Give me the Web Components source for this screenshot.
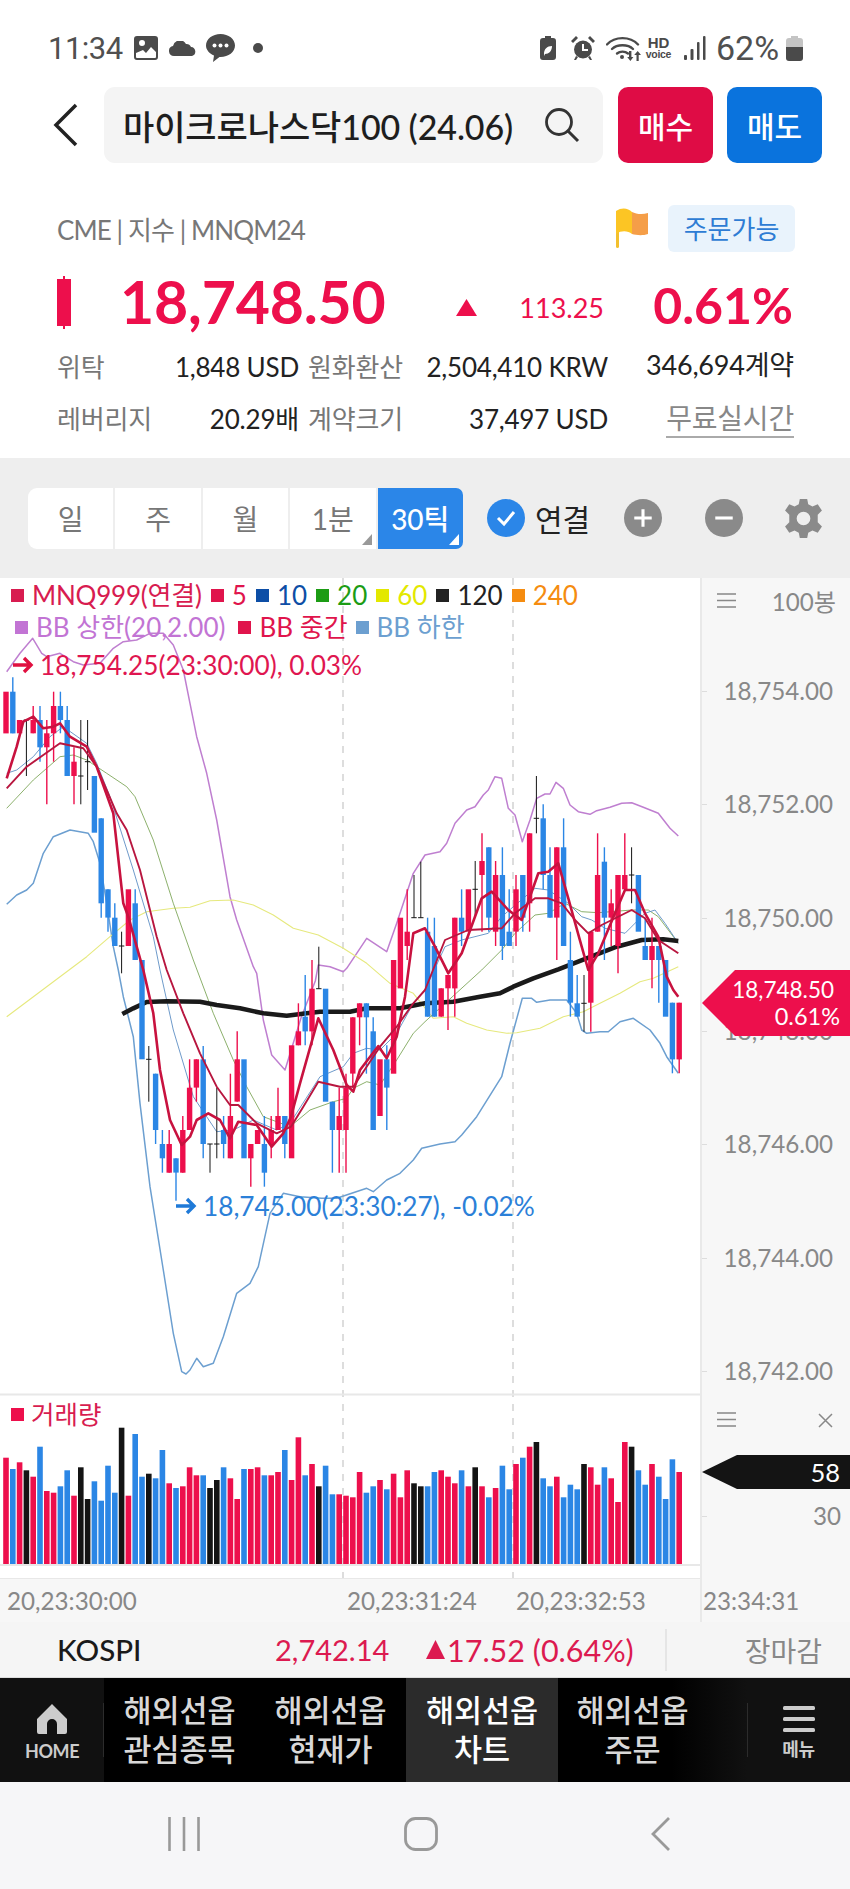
<!DOCTYPE html>
<html lang="ko">
<head>
<meta charset="utf-8">
<title>해외선옵 차트</title>
<style>
  html, body { margin: 0; padding: 0; background: #fff; }
  body { width: 850px; height: 1889px; overflow: hidden; display: flex; flex-direction: column; font-family: "Lato", "Noto Sans CJK KR", sans-serif; color: #222; }
</style>
</head>
<body>
<status-bar></status-bar>
<search-header name="마이크로나스닥100 (24.06)"></search-header>
<quote-panel></quote-panel>
<period-toolbar></period-toolbar>
<stock-chart></stock-chart>
<ticker-bar></ticker-bar>
<bottom-nav></bottom-nav>
<system-bar></system-bar>

<script>
class BaseElement extends HTMLElement {
  constructor() {
    super();
    this.attachShadow({ mode: "open" });
  }
  connectedCallback() {
    const template = document.createElement("template");
    template.innerHTML = `<style>${this.getStyle()}</style>${this.getTemplate()}`;
    this.shadowRoot.appendChild(template.content.cloneNode(true));
  }
}

class StatusBar extends BaseElement {
  getStyle() {
    return `
      :host { display: flex; align-items: center; height: 76px; padding: 20px 47px 0 48px; box-sizing: border-box; color: #555; font-size: 31px; }
      svg { display: block; fill: #4a4a4a; flex: none; }
      .left, .right { display: flex; align-items: center; }
      .right { margin-left: auto; }
      .clock { width: 72px; letter-spacing: -.5px; color: #505050; font-family: "Roboto", sans-serif; }
      .pct { width: 70px; margin-left: 10px; font-size: 34px; font-family: "Roboto", sans-serif; color: #505050; white-space: nowrap; }
      .hd { width: 27px; height: 26px; margin-left: 3px; line-height: 1; text-align: center; font-family: "Liberation Sans", sans-serif; color: #4a4a4a; }
      .hd b { display: block; font-size: 15px; height: 14px; letter-spacing: 0; }
      .hd span { display: block; font-size: 10.5px; font-weight: 700; letter-spacing: -.3px; }
    `;
  }
  getTemplate() {
    return `
      <div class="left">
        <span class="clock">11:34</span>
        <svg style="margin-left:14px" width="24" height="24" viewBox="0 0 24 24"><path fill-rule="evenodd" d="M3 0h18a3 3 0 0 1 3 3v18a3 3 0 0 1-3 3H3a3 3 0 0 1-3-3V3a3 3 0 0 1 3-3zM2 17v4a1 1 0 0 0 1 1h18a1 1 0 0 0 1-1v-5l-5-5-5 6-3-3zM8 4a3 3 0 1 0 0 6 3 3 0 0 0 0-6z"/></svg>
        <svg style="margin-left:11px" width="28" height="15" viewBox="0 0 28 15"><path d="M5 15a5 5 0 0 1-1-9.9A7 7 0 0 1 17 3a5 5 0 0 1 5 3 4.6 4.6 0 0 1 1 9z"/></svg>
        <svg style="margin-left:9px" width="29" height="28" viewBox="0 0 29 28"><path d="M14.500 0C22.500 0 29 5 29 11.500S22.500 23 14.500 23h-1L7 28l1-6.500C3.500 19.500 0 16 0 11.500 0 5 6.500 0 14.500 0z"/><circle cx="8.500" cy="11.500" r="2" fill="#fff"/><circle cx="14.500" cy="11.500" r="2" fill="#fff"/><circle cx="20.500" cy="11.500" r="2" fill="#fff"/></svg>
        <svg style="margin-left:18px" width="10" height="10" viewBox="0 0 10 10"><circle cx="5" cy="5" r="5"/></svg>
      </div>
      <div class="right">
        <svg width="16" height="24" viewBox="0 0 16 24"><path d="M5 0h6v2h2a3 3 0 0 1 3 3v16a3 3 0 0 1-3 3H3a3 3 0 0 1-3-3V5a3 3 0 0 1 3-3h2z"/><path d="M4 18c0-5 3-8 8-8 0 5-3 8-7 8l-1 2z" fill="#fff"/></svg>
        <svg style="margin-left:15px" width="24" height="24" viewBox="0 0 24 24"><circle cx="12" cy="13.500" r="9"/><path d="M5 0 0 5l2 2 5-5zM19 0l5 5-2 2-5-5zM5 20l-2 4h2l2-3zM19 20l2 4h-2l-2-3z"/><path d="M12 8v6h5" fill="none" stroke="#fff" stroke-width="2"/></svg>
        <svg style="margin-left:11px" width="36" height="26" viewBox="0 0 36 26"><g fill="none" stroke="#4a4a4a" stroke-width="2.400" stroke-linecap="round"><path d="M1 9.500C9 1 24 1 32 9.500"/><path d="M6 14c5-5 16-5 21 0"/><path d="M11 18.500c3-2.500 8-2.500 11 0"/></g><circle cx="16" cy="22" r="2"/><path d="M23 16h2.400v6h2l-3 4-3.200-4h1.800zM30.500 26h2.200v-6h2.300l-3.300-4-3.500 4h2.300z"/></svg>
        <div class="hd"><b>HD</b><span>voice</span></div>
        <svg style="margin-left:12px" width="22" height="24" viewBox="0 0 22 24"><rect x="0" y="19" width="3" height="5" rx="1"/><rect x="6.500" y="13" width="3" height="11" rx="1"/><rect x="13" y="6" width="2.500" height="18" rx="1"/><rect x="19" y="0" width="2.500" height="24" rx="1"/></svg>
        <span class="pct">62%</span>
        <svg width="17" height="25" viewBox="0 0 17 25"><path d="M5 0h7v2h2a3 3 0 0 1 3 3v6H0V5a3 3 0 0 1 3-3h2z" fill="#c4c4c4"/><path d="M0 11h17v11a3 3 0 0 1-3 3H3a3 3 0 0 1-3-3z" fill="#4a4a4a"/></svg>
      </div>
    `;
  }
}

class SearchHeader extends BaseElement {
  getStyle() {
    return `
      :host { display: flex; align-items: flex-start; height: 99px; padding: 11px 28px 0 0; box-sizing: border-box; }
      .back { display: block; width: 104px; height: 44px; flex: none; margin-top: 16px; }
      .box { flex: 1; height: 76px; display: flex; align-items: center; background: #f4f4f4; border-radius: 11px; padding: 0 23px 0 19px; box-sizing: border-box; color: #1e1e1e; font-size: 34px; font-weight: 500; letter-spacing: -.1px; white-space: nowrap; }
      .box svg { margin-left: auto; flex: none; }
      .btn { flex: none; width: 95px; height: 76px; display: flex; align-items: center; justify-content: center; border-radius: 10px; color: #fff; font-size: 30px; font-weight: 500; }
      .buy { background: #df0c45; margin-left: 15px; }
      .sell { background: #0a73dd; margin-left: 14px; }
    `;
  }
  getTemplate() {
    return `
      <svg class="back" viewBox="0 0 104 44"><path d="M76 2 56 22l20 20" fill="none" stroke="#222" stroke-width="3.500"/></svg>
      <div class="box"><span>${this.getAttribute("name")}</span>
        <svg width="36" height="36" viewBox="0 0 36 36"><circle cx="15" cy="15" r="12.500" fill="none" stroke="#333" stroke-width="2.800"/><path d="m24 24 10 10" stroke="#333" stroke-width="3"/></svg>
      </div>
      <div class="btn buy">매수</div>
      <div class="btn sell">매도</div>
    `;
  }
}

class QuotePanel extends BaseElement {
  getStyle() {
    return `
      :host { display: block; height: 283px; padding: 30px 57px 0; box-sizing: border-box; }
      .top { display: flex; align-items: center; height: 47px; color: #777; font-size: 26px; letter-spacing: -.9px; }
      .top svg { margin-left: auto; }
      .badge { margin-left: 20px; margin-right: -2px; width: 127px; height: 45px; padding-bottom: 2px; display: flex; align-items: center; justify-content: center; background: #e9f3fc; border-radius: 6px; color: #2e7cd4; font-size: 26px; letter-spacing: 0; }
      .price { display: grid; grid-template-columns: 63px 1fr; align-items: center; height: 64px; margin-top: 17px; color: #ed0f4c; }
      .price .now { font-size: 59px; font-weight: 700; letter-spacing: -.2px; line-height: 64px; }
      .main { display: flex; align-items: center; }
      .tri { margin-left: auto; margin-top: 10px; }
      .chg { width: 127px; text-align: right; font-size: 27px; margin-top: 10px; }
      .pct { width: 189px; text-align: right; font-size: 50px; font-weight: 700; margin-top: 6px; }
      .grid { display: grid; grid-template-columns: 95px 147px 102px 207px 185px; align-items: center; font-size: 26px; color: #222; margin-top: 8px; letter-spacing: -.2px; }
      .grid > div { height: 52px; line-height: 52px; white-space: nowrap; }
      .l { color: #777; }
      .v { text-align: right; }
      .gap { padding-left: 9px; }
      .grid > .lot { font-size: 27px; margin-top: -4px; margin-right: -1px; }
      .grid > .free { color: #888; text-align: right; font-size: 28px; margin-right: -1px; margin-top: -2px; }
      .free span { border-bottom: 2px solid #aaa; padding-bottom: 1px; }
    `;
  }
  getTemplate() {
    return `
      <div class="top">
        <span>CME | 지수 | MNQM24</span>
        <svg width="32" height="42" viewBox="0 0 32 42"><rect x="0" y="3" width="3" height="37" rx="1.500" fill="#f3c02e"/><path d="M0 3c6-4 12-3 16 1v22C12 23 6 22 0 26z" fill="#fcc524"/><path d="M16 4c4 2 10 3 16 1v21c-6 2-12 1-16 0z" fill="#f59e48"/></svg>
        <div class="badge">주문가능</div>
      </div>
      <div class="price">
        <svg width="14" height="53" viewBox="0 0 14 53"><path d="M6 0h2v3h6v47H8v3H6v-3H0V3h6z" fill="#ed0f4c"/></svg>
        <div class="main">
          <span class="now">18,748.50</span>
          <svg class="tri" width="21" height="17" viewBox="0 0 21 17"><path d="M10.500 0 21 17H0z" fill="#ed0f4c"/></svg>
          <span class="chg">113.25</span>
          <span class="pct">0.61%</span>
        </div>
      </div>
      <div class="grid">
        <div class="l">위탁</div><div class="v">1,848 USD</div><div class="l gap">원화환산</div><div class="v">2,504,410 KRW</div><div class="v lot">346,694계약</div>
        <div class="l">레버리지</div><div class="v">20.29배</div><div class="l gap">계약크기</div><div class="v">37,497 USD</div><div class="free"><span>무료실시간</span></div>
      </div>
    `;
  }
}

class PeriodToolbar extends BaseElement {
  getStyle() {
    return `
      :host { display: flex; align-items: center; height: 120px; padding: 0 27px 0 28px; box-sizing: border-box; background: #eee; }
      .tabs { display: grid; grid-template-columns: repeat(5, 85.400px); column-gap: 2px; height: 61px; width: 435px; }
      .tab { position: relative; display: flex; align-items: center; justify-content: center; background: #fff; color: #777; font-size: 28px; }
      .tab:first-child { border-radius: 9px 0 0 9px; }
      .on { background: #2b86e8; color: #fff; border-radius: 0 7px 7px 0; font-weight: 500; }
      .corner::after { content: ""; position: absolute; right: 4px; bottom: 4px; border-style: solid; border-width: 0 0 11px 10px; border-color: transparent transparent #999 transparent; }
      .on.corner::after { border-bottom-color: #fff; }
      .link { display: flex; align-items: center; margin-left: 24px; color: #222; font-size: 30px; }
      .link span { margin-left: 10px; }
      .ctl { display: flex; align-items: center; margin-left: auto; }
      .ctl svg { display: block; margin-left: 43px; }
      .ctl svg:first-child { margin-left: 0; }
      .ctl svg:last-child { margin-left: 41px; }
    `;
  }
  getTemplate() {
    return `
      <div class="tabs">
        <div class="tab">일</div><div class="tab">주</div><div class="tab">월</div>
        <div class="tab corner">1분</div><div class="tab on corner">30틱</div>
      </div>
      <div class="link">
        <svg width="38" height="38" viewBox="0 0 38 38"><circle cx="19" cy="19" r="19" fill="#2b86e8"/><path d="m11 19 6 6 10-12" fill="none" stroke="#fff" stroke-width="3"/></svg>
        <span>연결</span>
      </div>
      <div class="ctl">
        <svg width="38" height="38" viewBox="0 0 37 37"><circle cx="18.500" cy="18.500" r="18.500" fill="#8a8a8a"/><path d="M18.500 10v17M10 18.500h17" stroke="#fff" stroke-width="3"/></svg>
        <svg width="38" height="38" viewBox="0 0 37 37"><circle cx="18.500" cy="18.500" r="18.500" fill="#8a8a8a"/><path d="M10 18.500h17" stroke="#fff" stroke-width="3"/></svg>
        <svg width="39" height="39" viewBox="0 0 37 37"><path fill="#8a8a8a" fill-rule="evenodd" d="M15 0h7l1 5 4 2 5-2 4 6-4 4v7l4 4-4 6-5-2-4 2-1 5h-7l-1-5-4-2-5 2-4-6 4-4v-7L1 11l4-6 5 2 4-2zM18.500 12a6.500 6.500 0 1 0 0 13 6.500 6.500 0 0 0 0-13z"/></svg>
      </div>
    `;
  }
}

const RED = "#ed0f4c", BLUE = "#2b86e5", BLACK = "#141414";
const COLORS = { r: RED, b: BLUE, k: BLACK };

// color, body top, body bottom, wick top, wick bottom (measured on a 3x grid, y = 570 + v / 3)
const CANDLES = [
  ["r",365,490],["b",365,490,322,490],["r",450,490],["k",450,452,450,618],["r",450,490,408,490],
  ["b",450,532,408,575],["r",490,532,450,703],["r",408,490,365,575],["b",408,450,365,490],["b",450,618,408,618],
  ["r",575,618,532,703],["k",618,620,450,703],["k",575,577,450,660],["b",618,788],["b",745,1000,745,1043],
  ["b",958,1043,958,1085],["b",1043,1128,1000,1128],["k",1128,1130,1085,1210],["r",958,1128],["b",1000,1170,958,1170],
  ["b",1170,1468],["k",1468,1470,1428,1595],["b",1511,1680,1511,1722],["b",1722,1765,1680,1808],["r",1722,1808,1680,1808],
  ["b",1765,1808,1765,1892],["r",1680,1808,1638,1808],["r",1553,1680,1468,1680],["r",1468,1553,1468,1595],["b",1468,1722,1428,1765],
  ["k",1722,1724,1722,1808],["k",1722,1724,1553,1765],["b",1680,1722,1638,1765],["r",1638,1765,1511,1765],["r",1468,1595,1384,1595],
  ["b",1468,1765],["r",1722,1765,1722,1850],["r",1680,1722],["b",1722,1808,1638,1850],["r",1680,1722,1638,1765],
  ["r",1638,1680,1553,1680],["b",1638,1722,1638,1765],["r",1426,1765],["r",1384,1426,1300,1426],["b",1340,1384,1215,1426],
  ["r",1256,1384,1170,1426],["k",1256,1258,1130,1256],["b",1256,1595],["b",1595,1680,1595,1808],["r",1638,1680,1553,1808],
  ["r",1553,1680,1511,1808],["r",1342,1511,1342,1553],["r",1300,1342,1300,1426],["b",1300,1342,1300,1511],["b",1384,1680,1342,1680],
  ["r",1468,1638],["b",1468,1553,1426,1680],["r",1170,1511],["r",1043,1255],["r",1085,1128,958,1170],
  ["k",1043,1045,915,1043],["k",1043,1045,875,1043],["b",1085,1340,1043,1340],["b",1128,1340,1043,1340],["r",1255,1340,1255,1340],
  ["r",1215,1255,1215,1380],["r",1043,1255,1043,1340],["b",1043,1085,958,1128],["r",958,1085],["k",958,960,873,1043],
  ["r",873,915,790,1085],["b",832,1043,832,1085],["r",915,1085,873,1128],["b",915,1128,832,1170],["b",1085,1128,958,1128],
  ["r",958,1085,915,1128],["b",915,1043,915,1085],["r",790,1000,790,1085],["k",745,747,618,790],["b",745,915,703,958],
  ["b",915,1043,832,1043],["r",832,1043,832,1170],["b",832,1128,745,1128],["b",1170,1298,1085,1340],["b",1300,1340,1215,1340],
  ["k",1300,1302,1215,1385],["r",1085,1298,1085,1385],["r",915,1085,790,1085],["b",875,1043,832,1170],["r",1000,1043,958,1128],
  ["r",915,1128,915,1210],["r",915,958,790,958],["k",915,917,832,1000],["b",915,1085],["b",1128,1170,1043,1170],
  ["r",1128,1170,1043,1255],["b",1128,1170,1128,1298],["b",1170,1340],["b",1298,1468,1298,1510],["r",1298,1468,1298,1510]
];

// height tops of the volume bars, same grid, y = 1370 + v / 3
const VOLUME = "r263 b297 r277 k301 r320 b230 r363 r368 b349 b301 r377 k292 k387 b334 b392 b287 b368 k173 r377 b192 b320 k311 b325 b240 r340 b354 r349 r292 r316 b316 k354 k330 b292 r325 r387 b297 r297 r292 b316 r316 r306 b240 r330 r202 b316 r282 k349 b287 b373 r373 r377 r382 r306 b368 b349 r330 b358 r311 r382 r301 k340 k349 b349 b306 r301 r320 r340 b301 r349 k292 r349 b382 r354 b287 b358 r282 b263 r230 k216 b325 b349 r320 b382 b344 b358 k282 r292 r344 b292 r325 r396 r216 k230 b301 b344 r282 b320 b387 b268 r306".split(" ");

const LINES = [
  { c: "#bf7fd0", w: 1.5, p: "20,305 60,250 98,205 125,250 140,260 180,250 220,275 250,285 300,280 340,235 370,215 410,210 450,190 490,190 520,225 550,300 570,400 590,500 620,610 650,750 690,980 710,1050 760,1190 770,1210 790,1350 815,1455 855,1500 903,1344 946,1233 955,1185 990,1190 1030,1205 1040,1195 1100,1105 1160,1145 1190,1060 1240,910 1275,855 1320,845 1340,820 1365,760 1400,720 1425,710 1450,675 1465,660 1485,620 1505,625 1525,715 1545,735 1567,815 1590,750 1610,685 1635,672 1650,672 1668,637 1690,655 1710,705 1735,725 1770,733 1790,722 1830,712 1865,700 1895,698 1930,712 1975,730 2010,775 2035,798" },
  { c: "#6c9fd0", w: 1.5, p: "20,1003 50,975 80,960 100,940 130,850 160,800 210,780 265,790 280,815 300,880 320,1000 340,1130 355,1200 370,1280 400,1400 420,1600 450,1850 490,2100 520,2290 545,2405 558,2412 570,2400 590,2365 610,2390 640,2380 670,2300 710,2170 750,2140 775,2090 810,1930 850,1870 900,1880 965,1885 1010,1885 1100,1855 1120,1865 1160,1830 1200,1810 1240,1770 1265,1735 1320,1722 1365,1715 1385,1695 1430,1640 1505,1520 1530,1420 1567,1285 1595,1285 1610,1297 1650,1290 1700,1290 1730,1330 1745,1380 1760,1390 1800,1385 1825,1385 1860,1355 1900,1345 1950,1380 1980,1420 2000,1460 2035,1510" },
  { c: "#e6e97e", w: 1.1, p: "20,1340 200,1205 260,1160 330,1100 390,1050 440,1025 520,1015 570,1012 630,992 700,990 760,1005 820,1035 880,1075 955,1095 1030,1135 1100,1180 1170,1240 1240,1270 1300,1345 1360,1340 1400,1360 1460,1380 1520,1390 1550,1388 1620,1375 1690,1340 1750,1325 1800,1300 1860,1270 1920,1235 1960,1225 2035,1190" },
  { c: "#6f9c46", w: .8, p: "20,715 100,630 180,560 220,555 260,570 320,610 380,650 405,680 460,810 520,1000 580,1170 640,1330 700,1470 740,1550 790,1640 870,1670 930,1620 1000,1595 1040,1585 1060,1555 1100,1535 1140,1545 1190,1470 1240,1390 1275,1355 1445,1200 1505,1140 1545,1090 1605,1035 1645,1030 1695,1000 1745,1025 1795,1028 1895,1020 1945,1020 1975,1040 2035,1120" },
  { c: "#5e8ec4", w: .9, p: "20,610 50,600 100,560 150,500 190,470 260,520 290,580 330,680 400,900 460,1100 480,1200 520,1380 580,1580 650,1685 700,1680 760,1650 830,1680 870,1660 960,1520 1030,1490 1060,1450 1100,1435 1140,1440 1190,1390 1240,1300 1275,1260 1335,1130 1385,1110 1465,1090 1505,1040 1605,955 1645,960 1705,1000 1745,1040 1775,1050 1815,1075 1875,1090 1935,1030 1965,1020 1995,1060 2035,1120" },
  { c: "#1a1a1a", w: 4.6, p: "367,1332 400,1315 440,1296 500,1294 600,1295 650,1305 720,1315 790,1330 860,1337 920,1330 960,1325 1050,1325 1100,1315 1200,1315 1275,1300 1360,1295 1440,1280 1500,1270 1540,1250 1600,1225 1675,1198 1850,1130 1925,1110 1990,1108 2035,1113" }
];
const TOP_LINES = [
  { c: "#b8163f", w: 1.9, p: "20,655 80,590 130,555 180,520 250,535 290,590 350,730 380,780 420,900 470,1100 500,1200 550,1330 600,1450 650,1550 690,1605 715,1605 770,1660 830,1690 873,1670 910,1610 955,1535 1020,1550 1060,1550 1140,1430 1190,1370 1240,1300 1275,1260 1335,1110 1405,1080 1505,1075 1545,1030 1605,985 1645,985 1685,1000 1725,1050 1765,1090 1805,1065 1895,1020 1935,1045 1975,1110 2035,1150" },
  { c: "#c8123f", w: 2.6, p: "20,625 50,530 70,455 100,440 130,475 160,470 180,460 210,500 260,530 290,590 340,730 370,1000 385,1040 410,1130 430,1200 460,1330 480,1500 510,1650 545,1725 570,1700 590,1650 625,1630 660,1650 690,1705 715,1655 770,1665 815,1730 850,1690 873,1640 900,1540 955,1345 1000,1440 1040,1545 1060,1565 1080,1500 1135,1428 1160,1465 1190,1400 1215,1280 1240,1090 1275,1075 1305,1130 1335,1190 1345,1210 1385,1150 1445,985 1475,965 1525,1020 1565,1050 1615,910 1645,905 1675,880 1705,985 1745,1130 1765,1200 1795,1150 1845,1030 1875,960 1905,960 1935,1030 1975,1100 2000,1220 2020,1260 2035,1280" }
];

const yOf = price => 691 + (18754 - price) * 56.667;
const pts = s => s.split(" ").map(p => { const [x, y] = p.split(","); return `${(x / 3).toFixed(1)},${(570 + y / 3).toFixed(1)}`; }).join(" ");

class StockChart extends BaseElement {
  getStyle() {
    return `
      :host { display: grid; grid-template-columns: 700px 150px; grid-template-rows: 1001px 43px; background: #f7f7f7; }
      .plot { position: relative; background: #fff; height: 1001px; }
      .plot > svg { position: absolute; left: 0; top: 0; overflow: visible; }
      .axis { position: relative; border-left: 2px solid #e9e9e9; box-sizing: border-box; color: #888; font-size: 24.200px; }
      .tick { position: absolute; left: 0; right: 17px; text-align: right; transform: translateY(-50%); line-height: 30px; white-space: nowrap; }
      .tick::before { content: ""; position: absolute; top: 50%; left: 0; width: 5px; height: 1px; background: #ddd; }
      .bars { position: absolute; left: 15px; width: 19px; height: 15px; }
      .count { position: absolute; right: 14px; top: 9px; line-height: 30px; }
      .tag { position: absolute; left: 0; width: 148px; display: flex; flex-direction: column; align-items: flex-end; justify-content: center; color: #fff; box-sizing: border-box; padding-right: 10px; line-height: 27px; font-size: 23.500px; }
      .tag.cur { top: 392px; height: 66px; background: ${RED}; clip-path: polygon(0 50%, 33px 0, 100% 0, 100% 100%, 33px 100%); }
      .tag.cur span:first-child { margin-right: 6px; font-size: 22.500px; }
      .tag.vol { top: 877px; height: 34px; background: ${BLACK}; clip-path: polygon(0 50%, 35px 0, 100% 0, 100% 100%, 35px 100%); font-size: 25.500px; }
      .legend { position: absolute; left: 0; top: 0; right: 0; font-size: 26px; line-height: 32px; white-space: nowrap; }
      .row { display: flex; align-items: center; height: 32px; }
      .row.one { padding: 1px 0 0 11px; }
      .row.two { padding-left: 15px; }
      .k { display: flex; align-items: center; margin-right: 9px; }
      .k::before { content: ""; width: 13px; height: 13px; margin-right: 8px; background: currentColor; }
      .one .k:first-child { letter-spacing: -.2px; }
      .two .k { margin-right: 13px; }
      .two .k.mid { margin-right: 8px; }
      .note { position: absolute; display: flex; align-items: center; font-size: 26.200px; line-height: 30px; white-space: nowrap; }
      .note svg { margin-right: 6px; }
      .vol-title { position: absolute; left: 11px; top: 821px; display: flex; align-items: center; color: #d81c50; font-size: 25.500px; line-height: 30px; }
      .vol-title::before { content: ""; width: 13px; height: 13px; margin-right: 7px; background: ${RED}; }
      .times { grid-column: 1; position: relative; display: grid; grid-template-columns: 340px 169px 187px; padding-left: 7px; align-items: center; color: #888; font-size: 24.200px; white-space: nowrap; background: #f7f7f7; }
      .times2 { color: #888; font-size: 24.200px; display: flex; align-items: center; padding-left: 1px; border-left: 2px solid #e9e9e9; box-sizing: border-box; }
    `;
  }
  buildSvg() {
    let out = "";
    // dashed time grid
    [343, 513].forEach(x => {
      out += `<path d="M${x} 578V1588" stroke="#ddd" stroke-width="2" stroke-dasharray="7 7"/>`;
    });
    out += `<path d="M0 1394.500H700M0 1565H700M0 1579H700" stroke="#e8e8e8" stroke-width="2"/>`;
    const drawLine = l => `<polyline points="${pts(l.p)}" fill="none" stroke="${l.c}" stroke-width="${l.w}" stroke-linejoin="round"/>`;
    LINES.forEach(l => out += drawLine(l));
    CANDLES.forEach((c, i) => {
      const x = 6 + 6.8 * i;
      const col = COLORS[c[0]];
      const top = 570 + c[1] / 3, bot = 570 + c[2] / 3;
      if (c.length > 3) {
        out += `<path d="M${x.toFixed(1)} ${(570 + c[3] / 3).toFixed(1)}V${(570 + c[4] / 3).toFixed(1)}" stroke="${col}" stroke-width="${c[0] === "k" ? 1 : 1.400}"/>`;
      }
      if (c[0] === "k") {
        out += `<path d="M${(x - 2.700).toFixed(1)} ${top.toFixed(1)}h5.400" stroke="${col}" stroke-width="1"/>`;
      } else {
        out += `<rect x="${(x - 2.700).toFixed(1)}" y="${top.toFixed(1)}" width="5.400" height="${(bot - top).toFixed(1)}" fill="${col}"/>`;
      }
    });
    TOP_LINES.forEach(l => out += drawLine(l));
    VOLUME.forEach((v, i) => {
      const x = 6 + 6.8 * i - 2.800;
      const top = 1370 + v.slice(1) / 3;
      out += `<rect x="${x.toFixed(1)}" y="${top.toFixed(1)}" width="5.600" height="${(1564 - top).toFixed(1)}" fill="${COLORS[v[0]]}"/>`;
    });
    return `<svg width="700" height="1010" viewBox="0 578 700 1010">${out}</svg>`;
  }
  getTemplate() {
    const arrow = c => `<svg width="21" height="18" viewBox="0 0 21 18"><path d="M0 9h18M11 2l7 7-7 7" fill="none" stroke="${c}" stroke-width="3.400"/></svg>`;
    const menu = top => `<svg class="bars" style="top:${top}px" viewBox="0 0 19 15"><path d="M0 1h19M0 7.500h19M0 14h19" stroke="#888" stroke-width="1.500"/></svg>`;
    const ticks = [18754, 18752, 18750, 18748, 18746, 18744, 18742].map(p =>
      `<div class="tick" style="top:${(yOf(p) - 578).toFixed(1)}px">${p.toLocaleString("en-US")}.00</div>`).join("");
    return `
      <div class="plot">
        ${this.buildSvg()}
        <div class="legend">
          <div class="row one">
            <span class="k" style="color:#d81c50">MNQ999(연결)</span>
            <span class="k" style="color:#e0144c">5</span>
            <span class="k" style="color:#0d4ea6">10</span>
            <span class="k" style="color:#1c9c14">20</span>
            <span class="k" style="color:#e3e800">60</span>
            <span class="k" style="color:#222">120</span>
            <span class="k" style="color:#f58c10">240</span>
          </div>
          <div class="row two">
            <span class="k" style="color:#c274d4">BB 상한(20,2.00)</span>
            <span class="k mid" style="color:#e0144c">BB 중간</span>
            <span class="k" style="color:#6c9fd0">BB 하한</span>
          </div>
        </div>
        <div class="note" style="left:13px;top:72px;color:#df1650">${arrow("#e01040")}<span>18,754.25(23:30:00), 0.03%</span></div>
        <div class="note" style="left:176px;top:613px;color:#2b80d8">${arrow("#1f7ad8")}<span>18,745.00(23:30:27), -0.02%</span></div>
        <div class="vol-title">거래량</div>
      </div>
      <div class="axis">
        ${menu(15)}
        <span class="count">100봉</span>
        ${ticks}
        <div class="tag cur"><span>18,748.50</span><span>0.61%</span></div>
        ${menu(834)}
        <svg style="position:absolute;left:116px;top:835px" width="15" height="15" viewBox="0 0 15 15"><path d="m1 1 13 13M14 1 1 14" stroke="#888" stroke-width="1.500"/></svg>
        <div class="tag vol">58</div>
        <div class="tick" style="top:938px;right:9px">30</div>
      </div>
      <div class="times"><span>20,23:30:00</span><span>20,23:31:24</span><span>20,23:32:53</span></div>
      <div class="times2">23:34:31</div>
    `;
  }
}

class TickerBar extends BaseElement {
  getStyle() {
    return `
      :host { display: flex; align-items: center; height: 56px; background: #f5f5f5; font-size: 29px; padding-left: 57px; box-sizing: border-box; border-bottom: 1px solid #ddd; }
      .name { width: 218px; color: #1a1a1a; font-weight: 500; font-size: 29.500px; }
      .up { color: #dc1a50; display: flex; align-items: center; }
      .val { width: 151px; }
      .up svg { margin-right: 2px; }
      .rate { font-size: 30.500px; }
      .sep { width: 2px; height: 42px; background: #e5e5e5; margin-left: 31px; }
      .end { margin-left: auto; margin-right: 28px; color: #888; font-size: 28px; }
    `;
  }
  getTemplate() {
    return `
      <span class="name">KOSPI</span>
      <span class="up"><span class="val">2,742.14</span>
        <svg width="19" height="19" viewBox="0 0 19 19"><path d="M9.500 0 19 19H0z" fill="#dc1a50"/></svg><span class="rate">17.52 (0.64%)</span></span>
      <span class="sep"></span>
      <span class="end">장마감</span>
    `;
  }
}

class BottomNav extends BaseElement {
  getStyle() {
    return `
      :host { display: grid; grid-template-columns: 104px 151px 151px 152px 189px 103px; height: 104px; background: #000; color: #d8d8d8; font-size: 30.500px; line-height: 39px; text-align: center; font-weight: 500; }
      .cell { display: flex; flex-direction: column; align-items: center; justify-content: center; }
      .side { background: #111; color: #ccc; position: relative; font-size: 18px; line-height: 20px; font-weight: 700; padding-top: 4px; box-sizing: border-box; letter-spacing: -.4px; }
      .side span { margin-top: 7px; }
      .on { background: #2b2b2b; color: #fff; }
      .fade { background: linear-gradient(90deg, #000 0, #000 60%, #111 100%); padding-right: 40px; box-sizing: border-box; }
      .rule { position: absolute; left: 0; top: 25px; width: 1px; height: 54px; background: #2c2c2c; }
      .home .rule { left: auto; right: 0; }
    `;
  }
  getTemplate() {
    return `
      <div class="cell side home">
        <svg width="30" height="30" viewBox="0 0 30 30"><path fill="#ccc" d="M15 0 30 15v13a2 2 0 0 1-2 2h-8V20a5 5 0 0 0-10 0v10H2a2 2 0 0 1-2-2V15z"/></svg>
        <span>HOME</span><i class="rule"></i>
      </div>
      <div class="cell">해외선옵<br>관심종목</div>
      <div class="cell">해외선옵<br>현재가</div>
      <div class="cell on">해외선옵<br>차트</div>
      <div class="cell fade">해외선옵<br>주문</div>
      <div class="cell side">
        <svg width="32" height="26" viewBox="0 0 32 26"><rect width="32" height="4" rx="1.500" fill="#ccc"/><rect y="11" width="32" height="4" rx="1.500" fill="#ccc"/><rect y="22" width="32" height="4" rx="1.500" fill="#ccc"/></svg>
        <span>메뉴</span><i class="rule"></i>
      </div>
    `;
  }
}

class SystemBar extends BaseElement {
  getStyle() {
    return `
      :host { display: grid; grid-template-columns: 168px 32px 204px 34px 213px 19px; align-items: center; height: 107px; padding-bottom: 4px; box-sizing: border-box; background: #f6f6f8; }
      svg { display: block; grid-row: 1; }
    `;
  }
  getTemplate() {
    return `
      <svg style="grid-column:2" width="32" height="34" viewBox="0 0 32 34"><path d="M1.500 0v34M16 0v34M30.500 0v34" stroke="#999" stroke-width="2.600"/></svg>
      <svg style="grid-column:4" width="34" height="34" viewBox="0 0 34 34"><rect x="1.500" y="1.500" width="31" height="31" rx="10" fill="none" stroke="#999" stroke-width="2.800"/></svg>
      <svg style="grid-column:6" width="19" height="34" viewBox="0 0 19 34"><path d="M18 1 2 17l16 16" fill="none" stroke="#999" stroke-width="2.800"/></svg>
    `;
  }
}

customElements.define("status-bar", StatusBar);
customElements.define("search-header", SearchHeader);
customElements.define("quote-panel", QuotePanel);
customElements.define("period-toolbar", PeriodToolbar);
customElements.define("stock-chart", StockChart);
customElements.define("ticker-bar", TickerBar);
customElements.define("bottom-nav", BottomNav);
customElements.define("system-bar", SystemBar);
</script>
</body>
</html>
